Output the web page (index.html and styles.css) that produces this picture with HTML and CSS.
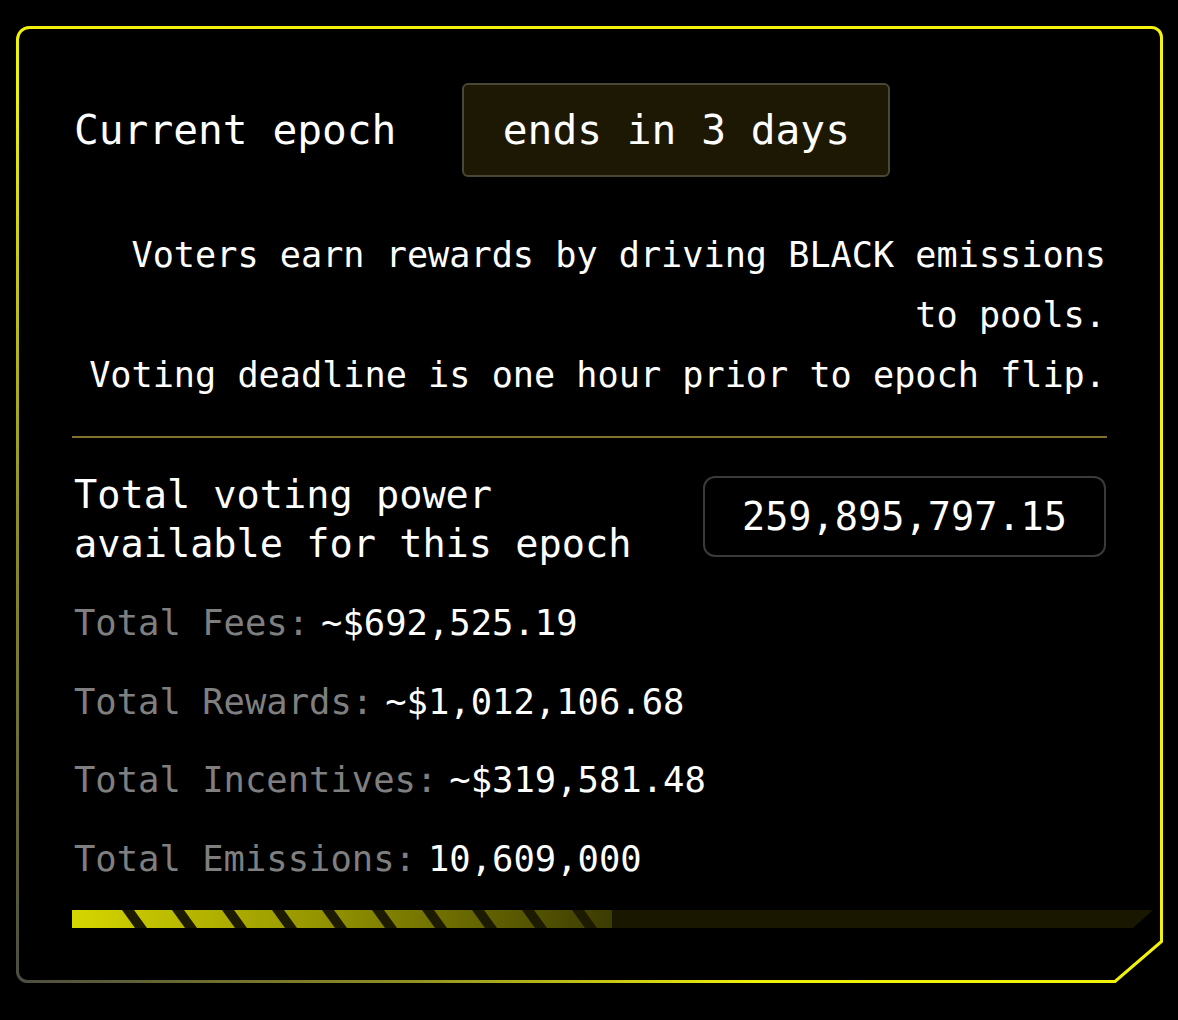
FILE: index.html
```html
<!DOCTYPE html>
<html lang="en">
<head>
<meta charset="utf-8">
<title>Current epoch</title>
<link rel="stylesheet" href="styles.css">
</head>
<body>
<section class="card">
  <svg class="frame" width="1147" height="957" viewBox="0 0 1147 957" aria-hidden="true">
    <defs>
      <linearGradient id="fg" gradientUnits="userSpaceOnUse" x1="1147" y1="0" x2="0" y2="957">
        <stop offset="0" stop-color="#f4f40c"/>
        <stop offset="0.62" stop-color="#f0f00a"/>
        <stop offset="0.8" stop-color="#8f8f22"/>
        <stop offset="1" stop-color="#4c4c40"/>
      </linearGradient>
    </defs>
    <path d="M13.5 1.5 H1135.5 A10 10 0 0 1 1145.5 11.5 V915.5 L1099 955.5 H11.5 A10 10 0 0 1 1.5 945.5 V13.5 A12 12 0 0 1 13.5 1.5 Z" fill="none" stroke="url(#fg)" stroke-width="3"/>
  </svg>

  <header class="head">
    <h1 class="title">Current epoch</h1>
    <div class="badge">ends in 3 days</div>
  </header>

  <div class="desc">
    <p>Voters earn rewards by driving BLACK emissions<br>to pools.</p>
    <p>Voting deadline is one hour prior to epoch flip.</p>
  </div>

  <hr class="divider">

  <div class="power">
    <div class="power-label">Total voting power<br>available for this epoch</div>
    <div class="power-value">259,895,797.15</div>
  </div>

  <ul class="stats">
    <li><span class="label">Total Fees:</span><span class="value">~$692,525.19</span></li>
    <li><span class="label">Total Rewards:</span><span class="value">~$1,012,106.68</span></li>
    <li><span class="label">Total Incentives:</span><span class="value">~$319,581.48</span></li>
    <li><span class="label">Total Emissions:</span><span class="value">10,609,000</span></li>
  </ul>

  <svg class="progress" width="1081" height="18" viewBox="0 0 1081 18" aria-hidden="true">
    <defs>
      <linearGradient id="pg" x1="0" y1="0" x2="1" y2="0">
        <stop offset="0" stop-color="#d6d600"/>
        <stop offset="0.5" stop-color="#8e8e00"/>
        <stop offset="1" stop-color="#3c3b03"/>
      </linearGradient>
    </defs>
    <polygon points="0,0 1081,0 1061,18 0,18" fill="#1a1700"/>
    <rect x="0" y="0" width="540" height="18" fill="url(#pg)"/>
    <g fill="#1d1a02">
      <polygon points="50,0 62,0 75,18 63,18"/>
      <polygon points="100,0 112,0 125,18 113,18"/>
      <polygon points="150,0 162,0 175,18 163,18"/>
      <polygon points="200,0 212,0 225,18 213,18"/>
      <polygon points="250,0 262,0 275,18 263,18"/>
      <polygon points="300,0 312,0 325,18 313,18"/>
      <polygon points="350,0 362,0 375,18 363,18"/>
      <polygon points="400,0 412,0 425,18 413,18"/>
      <polygon points="450,0 462,0 475,18 463,18"/>
      <polygon points="500,0 512,0 525,18 513,18"/>
    </g>
  </svg>
</section>
</body>
</html>
```

FILE: styles.css
```css
html, body {
  margin: 0;
  padding: 0;
  background: #000;
}

body {
  font-family: "DejaVu Sans Mono", "Liberation Mono", monospace;
  color: #fff;
  width: 1178px;
  height: 1020px;
  overflow: hidden;
}

.card {
  position: relative;
  box-sizing: border-box;
  width: 1147px;
  height: 957px;
  margin: 26px 0 0 16px;
  padding: 57px 57px 0 58px;
  display: flex;
  flex-direction: column;
}

.frame {
  position: absolute;
  left: 0;
  top: 0;
  pointer-events: none;
}

.head {
  display: flex;
  align-items: center;
  gap: 66px;
}

.title {
  margin: 0;
  font-size: 41.2px;
  font-weight: normal;
  line-height: 94px;
}

.badge {
  box-sizing: border-box;
  width: 428px;
  height: 94px;
  display: flex;
  align-items: center;
  justify-content: center;
  background: #1c1804;
  border: 2px solid #4b4736;
  border-radius: 6px;
  font-size: 41.2px;
}

.desc {
  margin-top: 48px;
  text-align: right;
  font-size: 35.2px;
  line-height: 60px;
}

.desc p {
  margin: 0;
}

.divider {
  margin: 31px -1px 0 -2px;
  height: 2px;
  border: 0;
  background: #82702e;
}

.power {
  margin-top: 32px;
  display: flex;
  justify-content: space-between;
  align-items: center;
}

.power-label {
  font-size: 38.6px;
  line-height: 49px;
}

.power-value {
  box-sizing: border-box;
  width: 403px;
  height: 81px;
  display: flex;
  align-items: center;
  justify-content: center;
  border: 2px solid #3a3a3a;
  border-radius: 12px;
  font-size: 38.6px;
  margin-top: -5px;
}

.stats {
  list-style: none;
  margin: 33px 0 0;
  padding: 0;
  display: flex;
  flex-direction: column;
  gap: 34.7px;
}

.stats li {
  display: flex;
  font-size: 35.5px;
  line-height: 44px;
}

.label {
  color: #7f7f7f;
  margin-right: 12px;
}

.value {
  color: #fff;
}

.progress {
  display: block;
  margin: 29px 0 0 -2px;
}
```
